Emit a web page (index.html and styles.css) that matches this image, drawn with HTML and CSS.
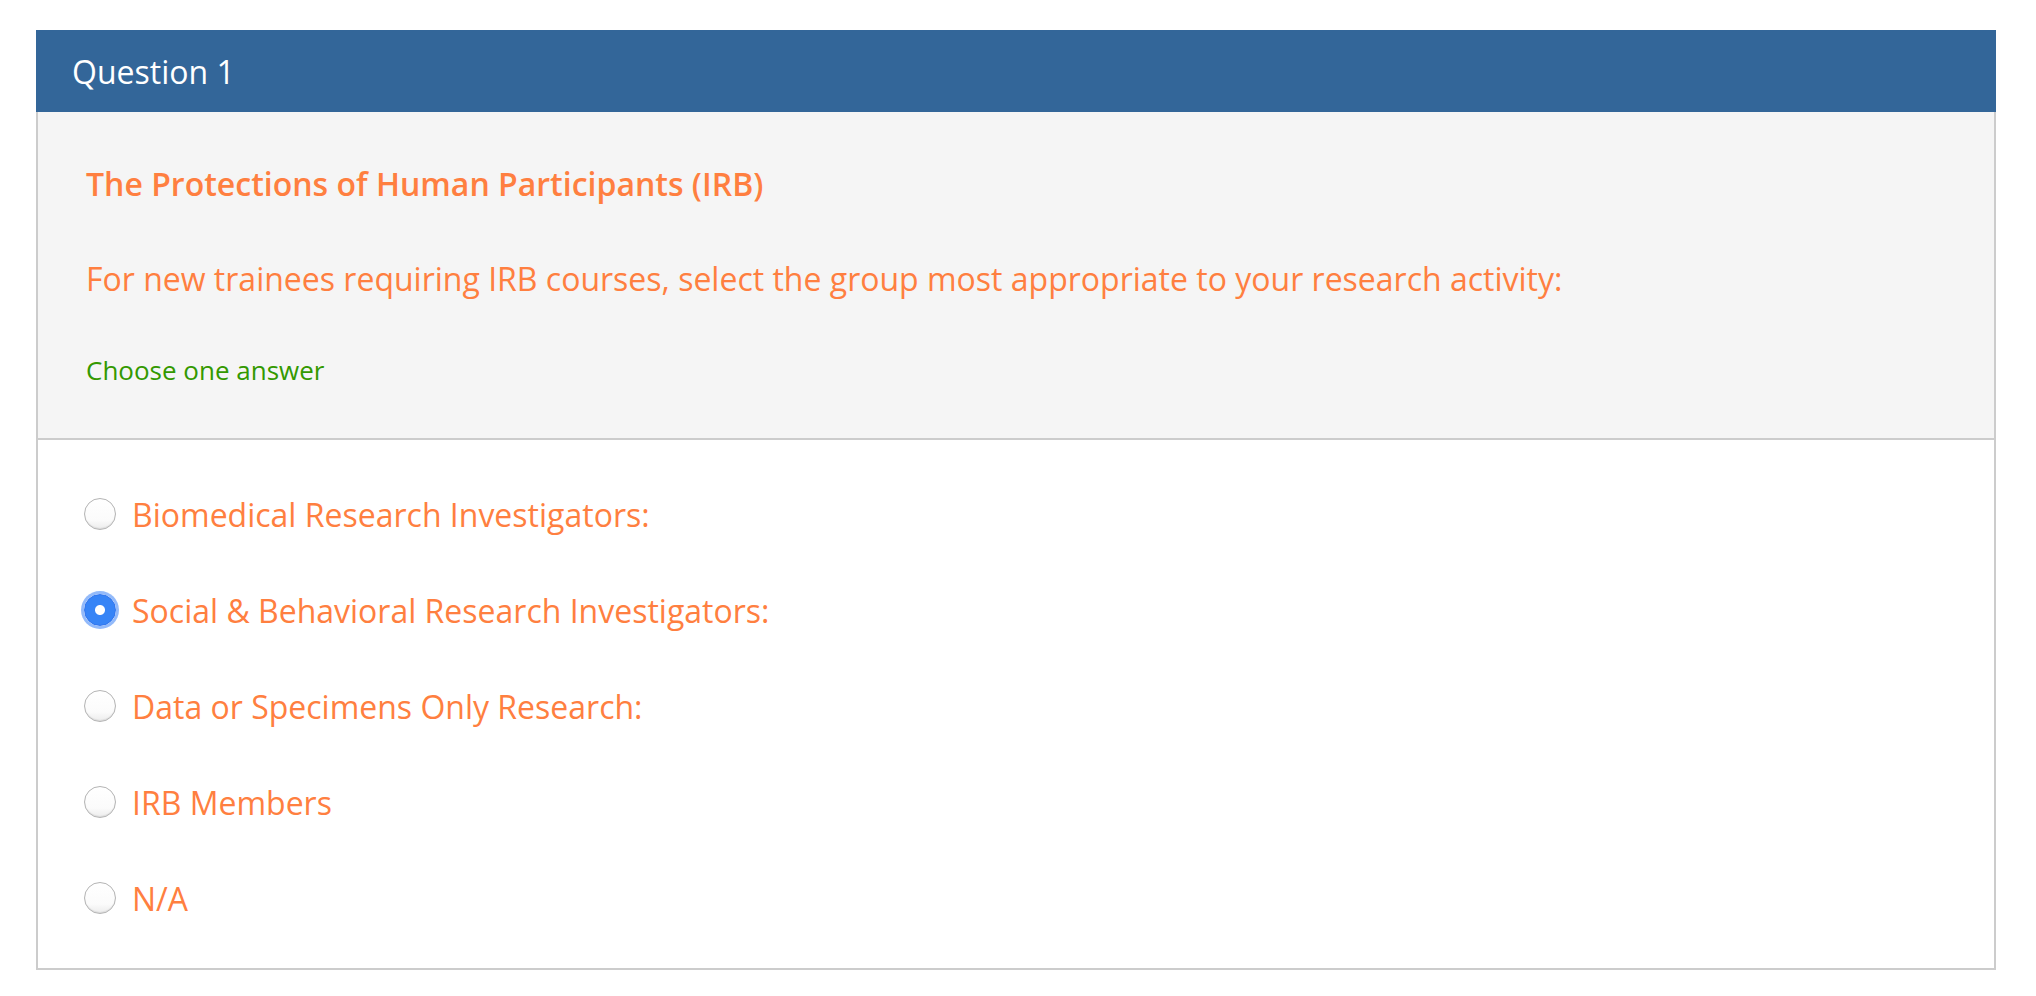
FILE: index.html
```html
<!DOCTYPE html>
<html lang="en">
<head>
<meta charset="utf-8">
<title>Question 1</title>
<link rel="stylesheet" href="styles.css">
</head>
<body>
<div class="card">
  <div class="card-header">Question 1</div>
  <div class="card-prompt">
    <div class="prompt-title">The Protections of Human Participants (IRB)</div>
    <div class="prompt-text">For new trainees requiring IRB courses, select the group most appropriate to your research activity:</div>
    <div class="prompt-hint">Choose one answer</div>
  </div>
  <div class="card-answers">
    <label class="answer"><input type="radio" name="q1" class="radio"><span>Biomedical Research Investigators:</span></label>
    <label class="answer"><input type="radio" name="q1" class="radio" checked><span>Social &amp; Behavioral Research Investigators:</span></label>
    <label class="answer"><input type="radio" name="q1" class="radio"><span>Data or Specimens Only Research:</span></label>
    <label class="answer"><input type="radio" name="q1" class="radio"><span>IRB Members</span></label>
    <label class="answer"><input type="radio" name="q1" class="radio"><span>N/A</span></label>
  </div>
</div>
</body>
</html>
```
FILE: styles.css
```css
html, body {
  margin: 0;
  padding: 0;
  background: #ffffff;
}
body {
  font-family: "Open Sans", "Noto Sans", sans-serif;
  padding: 30px 40px 0 36px;
}
.card {
  display: flex;
  flex-direction: column;
}
.card-header {
  background: #336699;
  color: #ffffff;
  height: 82px;
  padding-left: 36px;
  display: flex;
  align-items: center;
  font-size: 32px;
  font-weight: 400;
}
.card-prompt {
  background: #f5f5f5;
  border: 2px solid #cccccc;
  border-top: none;
  padding: 52px 48px 51px;
  display: flex;
  flex-direction: column;
  color: #ff7f40;
}
.prompt-title {
  font-size: 32px;
  line-height: 40px;
  font-weight: 600;
}
.prompt-text {
  font-size: 32px;
  line-height: 40px;
  margin-top: 55px;
}
.prompt-hint {
  font-size: 26px;
  line-height: 34px;
  margin-top: 54px;
  color: #339900;
}
.card-answers {
  border: 2px solid #cccccc;
  border-top: none;
  padding: 26px 46px 22px;
  display: flex;
  flex-direction: column;
}
.answer {
  height: 96px;
  display: flex;
  align-items: center;
  gap: 16px;
  font-size: 32px;
  color: #ff7f40;
}
.radio {
  appearance: none;
  -webkit-appearance: none;
  margin: 0;
  width: 32px;
  height: 32px;
  border-radius: 50%;
  border: 1.5px solid #b4b4b4;
  background: linear-gradient(#ffffff, #fbfbfb 70%, #ececec);
  box-shadow: inset 0 -1px 1px rgba(0,0,0,0.08);
  box-sizing: border-box;
  flex: none;
}
.radio:checked {
  border: 1px solid #2f74ee;
  background: radial-gradient(circle, #ffffff 0 4.5px, #3784f6 5.5px);
  box-shadow: 0 0 0 3px rgba(59,130,246,0.55);
}
```
